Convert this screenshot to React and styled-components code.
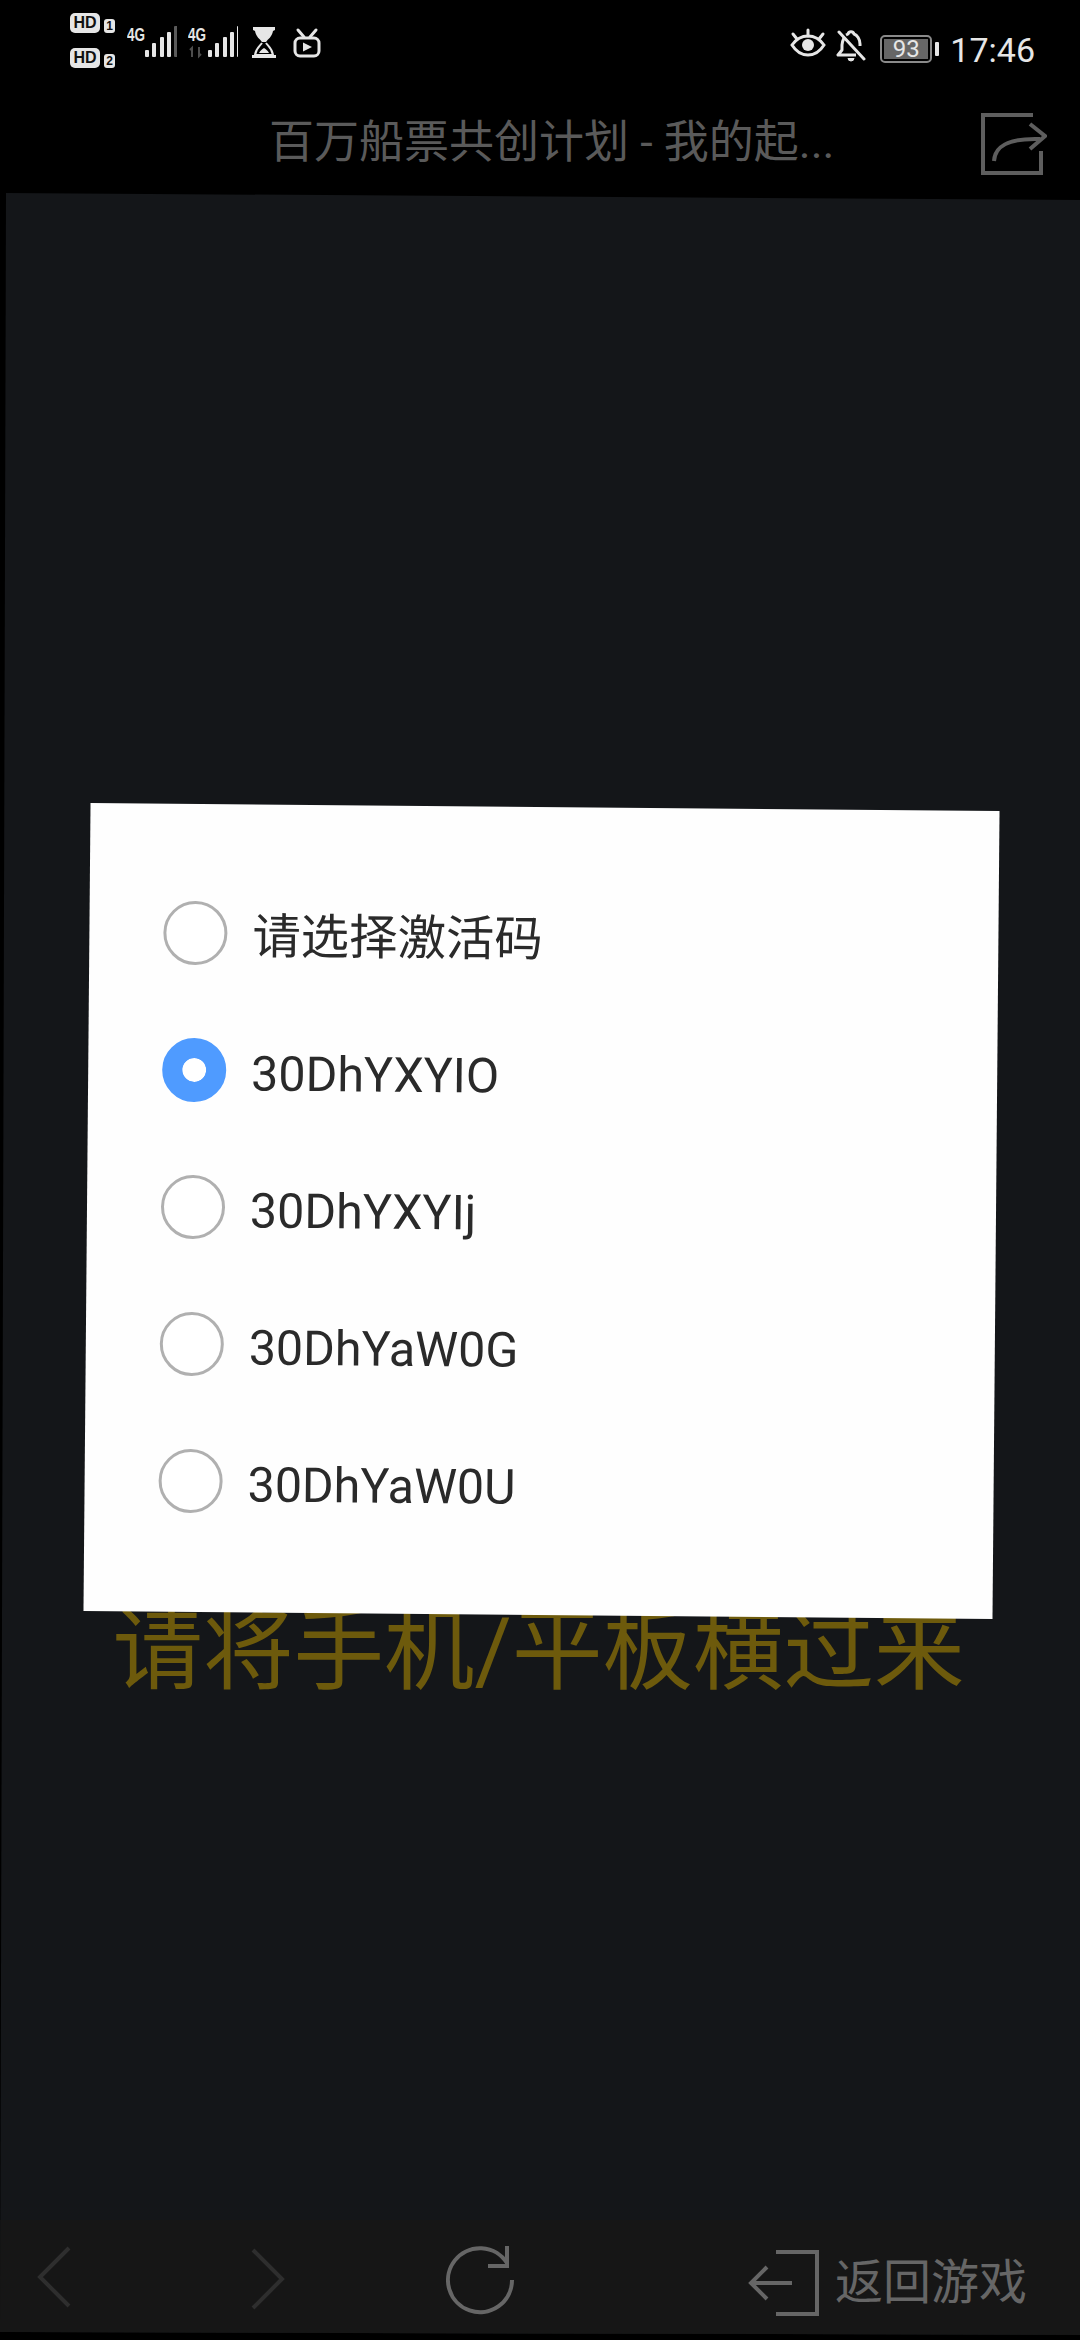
import React from "react";
import styled, { createGlobalStyle } from "styled-components";

const GlobalStyle = createGlobalStyle`
  html, body {
    margin: 0;
    padding: 0;
    background: #000;
    font-family: Roboto, "Noto Sans CJK SC", sans-serif;
  }
`;

const codes = [
  { label: "请选择激活码", selected: false },
  { label: "30DhYXYIO", selected: true },
  { label: "30DhYXYIj", selected: false },
  { label: "30DhYaW0G", selected: false },
  { label: "30DhYaW0U", selected: false },
];

function Signal({ dimLast, arrows }) {
  const xs = [2, 9, 17, 24, 31];
  const tops = [50, 43, 37, 32, 26];
  return (
    <SignalIcon viewBox="0 0 50 70">
      <text x="0" y="41" fontSize="19" fontWeight="700" fill="#e6e6e6" textLength="18" lengthAdjust="spacingAndGlyphs">
        4G
      </text>
      {arrows && (
        <path d="M4 57V48l-2 2M11 47v9l2-2" fill="none" stroke="#4d4d4d" strokeWidth="2" />
      )}
      {xs.map((x, i) => (
        <rect
          key={x}
          x={(arrows ? 18 : 16) + x}
          y={tops[i]}
          width="4"
          height={57 - tops[i]}
          rx="1"
          fill={dimLast && i === 4 ? "#5a5a5a" : "#e6e6e6"}
        />
      ))}
    </SignalIcon>
  );
}

export default function App() {
  return (
    <Screen>
      <GlobalStyle />
      <StatusBar>
        <HdStack>
          <HdRow>
            <HdBadge>HD</HdBadge>
            <SimBadge>1</SimBadge>
          </HdRow>
          <HdRow>
            <HdBadge>HD</HdBadge>
            <SimBadge>2</SimBadge>
          </HdRow>
        </HdStack>
        <Signal dimLast />
        <Signal arrows />
        <HourglassIcon viewBox="0 0 24 70">
          <path d="M1 27h22v3l-2 1c-1 6-5 8-7 11h-4c-2-3-6-5-7-11l-2-1z" fill="#e6e6e6" />
          <path d="M10 43c-2 3-6 5-7 12h18c-1-7-5-9-7-12" fill="none" stroke="#e6e6e6" strokeWidth="2" />
          <path d="M7 53c1-2 3-4 5-5 2 1 4 3 5 5z" fill="#e6e6e6" />
          <rect x="0" y="55" width="24" height="3" fill="#e6e6e6" />
        </HourglassIcon>
        <TvIcon viewBox="0 0 28 70">
          <path d="M5 30l6 7M23 30l-6 7" fill="none" stroke="#e6e6e6" strokeWidth="3" strokeLinecap="round" />
          <rect x="2" y="38" width="24" height="18" rx="5" fill="none" stroke="#e6e6e6" strokeWidth="3" />
          <path d="M10 42.500l9 4.500-9 4.500z" fill="#e6e6e6" />
        </TvIcon>
        <StatusRight>
          <EyeIcon viewBox="0 0 36 70">
            <path d="M2 48c5-7 10-9 16-9s11 2 16 9c-5 8-10 10-16 10s-11-2-16-10z" fill="none" stroke="#e6e6e6" strokeWidth="3" />
            <circle cx="18" cy="48" r="6" fill="#e6e6e6" />
            <path d="M18 39v-6M7 42l-4-5M29 42l4-5" fill="none" stroke="#e6e6e6" strokeWidth="3" strokeLinecap="round" />
          </EyeIcon>
          <BellIcon viewBox="0 0 30 70">
            <path d="M8 40c-1 2-2 4-2 7v5l-4 5h18M24 48v-2c0-5-3-9-6-10-1-3-5-3-6 0l-2 1" fill="none" stroke="#e6e6e6" strokeWidth="3" strokeLinejoin="round" />
            <path d="M12 60a3 3 0 0 0 6 0" fill="#e6e6e6" stroke="#e6e6e6" strokeWidth="1" />
            <path d="M3 34l25 27" stroke="#e6e6e6" strokeWidth="3" strokeLinecap="round" />
          </BellIcon>
          <Battery>
            <BatteryBody>
              <BatteryLevel>93</BatteryLevel>
            </BatteryBody>
            <BatteryCap />
          </Battery>
          <Clock>17:46</Clock>
        </StatusRight>
      </StatusBar>

      <TitleBar>
        <PageTitle>百万船票共创计划 - 我的起...</PageTitle>
        <ShareButton viewBox="0 0 66 62">
          <path d="M52 2H2v58h58V38" fill="none" stroke="#5e5e5e" strokeWidth="4" />
          <path d="M13 48c1-15 14-23 46-22" fill="none" stroke="#5e5e5e" strokeWidth="4" />
          <path d="M49 11l15 12-15 13" fill="none" stroke="#5e5e5e" strokeWidth="4" />
        </ShareButton>
      </TitleBar>

      <Panel>
        <Stage>
          <RotateHint>请将手机/平板横过来</RotateHint>
        </Stage>
        <BottomBar>
          <NavArrow viewBox="0 0 36 62">
            <path d="M33 2L4 31l29 29" fill="none" stroke="#2e2e2e" strokeWidth="4" />
          </NavArrow>
          <NavArrowForward viewBox="0 0 36 62">
            <path d="M3 2l29 29L3 60" fill="none" stroke="#2e2e2e" strokeWidth="4" />
          </NavArrowForward>
          <RefreshIcon viewBox="0 0 70 70">
            <path d="M61 17A32 32 0 1 0 66 34" fill="none" stroke="#666" strokeWidth="4" />
            <path d="M61 0v20H42" fill="none" stroke="#666" strokeWidth="4" />
          </RefreshIcon>
          <BackToGame>
            <svg width="72" height="66" viewBox="0 0 72 66">
              <path d="M28 2h41v62H28" fill="none" stroke="#666" strokeWidth="4" />
              <path d="M2 33h42M19 17L3 33l16 16" fill="none" stroke="#666" strokeWidth="4" />
            </svg>
            <BackLabel>返回游戏</BackLabel>
          </BackToGame>
        </BottomBar>
      </Panel>

      <Dialog>
        {codes.map((code) => (
          <Option key={code.label}>
            <Radio $selected={code.selected} />
            <OptionLabel>{code.label}</OptionLabel>
          </Option>
        ))}
      </Dialog>
    </Screen>
  );
}

const Screen = styled.div`
  position: relative;
  width: 1080px;
  height: 2340px;
  display: flex;
  flex-direction: column;
  background: #000;
  overflow: hidden;
`;

const StatusBar = styled.div`
  height: 90px;
  padding-left: 70px;
  display: flex;
  align-items: flex-start;
`;

const HdStack = styled.div`
  width: 46px;
  padding-top: 13px;
  display: flex;
  flex-direction: column;
  gap: 15px;
`;

const HdRow = styled.div`
  height: 20px;
  display: flex;
  align-items: flex-end;
  gap: 4px;
`;

const HdBadge = styled.span`
  width: 30px;
  height: 20px;
  border-radius: 5px;
  background: #e6e6e6;
  color: #111;
  font: 700 16px/20px "Liberation Sans", sans-serif;
  text-align: center;
`;

const SimBadge = styled.span`
  width: 11px;
  height: 14px;
  border-radius: 3px;
  background: #e6e6e6;
  color: #111;
  font: 700 12px/14px "Liberation Sans", sans-serif;
  text-align: center;
`;

const SignalIcon = styled.svg`
  width: 50px;
  height: 70px;
  margin-left: 11px;
  font-family: "Liberation Sans", sans-serif;
`;

const HourglassIcon = styled.svg`
  width: 24px;
  height: 70px;
  margin-left: 14px;
`;

const TvIcon = styled.svg`
  width: 28px;
  height: 70px;
  margin-left: 17px;
`;

const StatusRight = styled.div`
  margin-left: auto;
  padding-right: 45px;
  display: flex;
  align-items: flex-start;
`;

const EyeIcon = styled.svg`
  width: 36px;
  height: 70px;
  margin-top: -3px;
`;

const BellIcon = styled.svg`
  width: 30px;
  height: 70px;
  margin-top: -2px;
  margin-left: 10px;
`;

const Battery = styled.div`
  margin-top: 35px;
  margin-left: 14px;
  display: flex;
  align-items: center;
  gap: 3px;
`;

const BatteryBody = styled.div`
  width: 52px;
  height: 28px;
  box-sizing: border-box;
  border: 2px solid #8a8a8a;
  border-radius: 5px;
  padding: 2px;
  display: flex;
`;

const BatteryLevel = styled.span`
  flex: 1;
  background: #666;
  color: #e6e6e6;
  font-size: 24px;
  line-height: 20px;
  text-align: center;
`;

const BatteryCap = styled.span`
  width: 4px;
  height: 14px;
  border-radius: 1px;
  background: #e6e6e6;
`;

const Clock = styled.span`
  margin-top: 30px;
  margin-left: 11px;
  color: #e6e6e6;
  font-size: 34px;
  line-height: 40px;
`;

const TitleBar = styled.div`
  height: 103px;
  padding-left: 269px;
  padding-right: 33px;
  display: flex;
  align-items: center;
  justify-content: space-between;
`;

const PageTitle = styled.h1`
  margin: 0;
  padding-top: 3px;
  color: #5a5a5a;
  font-size: 45px;
  font-weight: 400;
  line-height: 60px;
  white-space: nowrap;
`;

const ShareButton = styled.svg`
  width: 66px;
  height: 62px;
  margin-top: 4px;
`;

const Panel = styled.div`
  height: 2142px;
  display: flex;
  flex-direction: column;
  background: #141619;
  clip-path: polygon(6px 0, 100% 7px, 100% 100%, 0 calc(100% - 3px));
`;

const Stage = styled.div`
  flex: 1;
  padding-top: 1408px;
  padding-right: 3px;
  text-align: center;
`;

const RotateHint = styled.div`
  color: #6d5a0c;
  font-size: 90.500px;
  line-height: 100px;
  white-space: nowrap;
`;

const BottomBar = styled.div`
  height: 115px;
  background: #161616;
  display: flex;
  align-items: flex-start;
  padding-left: 36px;
  padding-top: 26px;
  box-sizing: border-box;
`;

const NavArrow = styled.svg`
  width: 36px;
  height: 62px;
`;

const NavArrowForward = styled(NavArrow)`
  margin-left: 178px;
  margin-top: 2px;
`;

const RefreshIcon = styled.svg`
  width: 70px;
  height: 70px;
  margin-left: 160px;
`;

const BackToGame = styled.div`
  margin-left: auto;
  padding-right: 53px;
  padding-top: 4px;
  display: flex;
  align-items: center;
  gap: 15px;
`;

const BackLabel = styled.span`
  color: #666;
  font-size: 48px;
  line-height: 66px;
`;

const Dialog = styled.div`
  position: absolute;
  left: 87px;
  top: 807px;
  width: 909px;
  height: 808px;
  box-sizing: border-box;
  padding: 60px 0 0 74px;
  background: #fefefe;
  transform: skew(-0.5deg, 0.5deg);
`;

const Option = styled.div`
  height: 137px;
  display: flex;
  align-items: center;
  gap: 25px;
`;

const Radio = styled.span`
  width: 64px;
  height: 64px;
  box-sizing: border-box;
  border-radius: 50%;
  flex: none;
  ${({ $selected }) =>
    $selected
      ? "background: #4f9bff; border: 20px solid #4f9bff; box-shadow: inset 0 0 0 12px #fff;"
      : "background: #fff; border: 3px solid #b0b0b0;"}
`;

const OptionLabel = styled.span`
  padding-top: 8px;
  color: #2a2a2a;
  font-size: 48.400px;
  line-height: 60px;
`;
